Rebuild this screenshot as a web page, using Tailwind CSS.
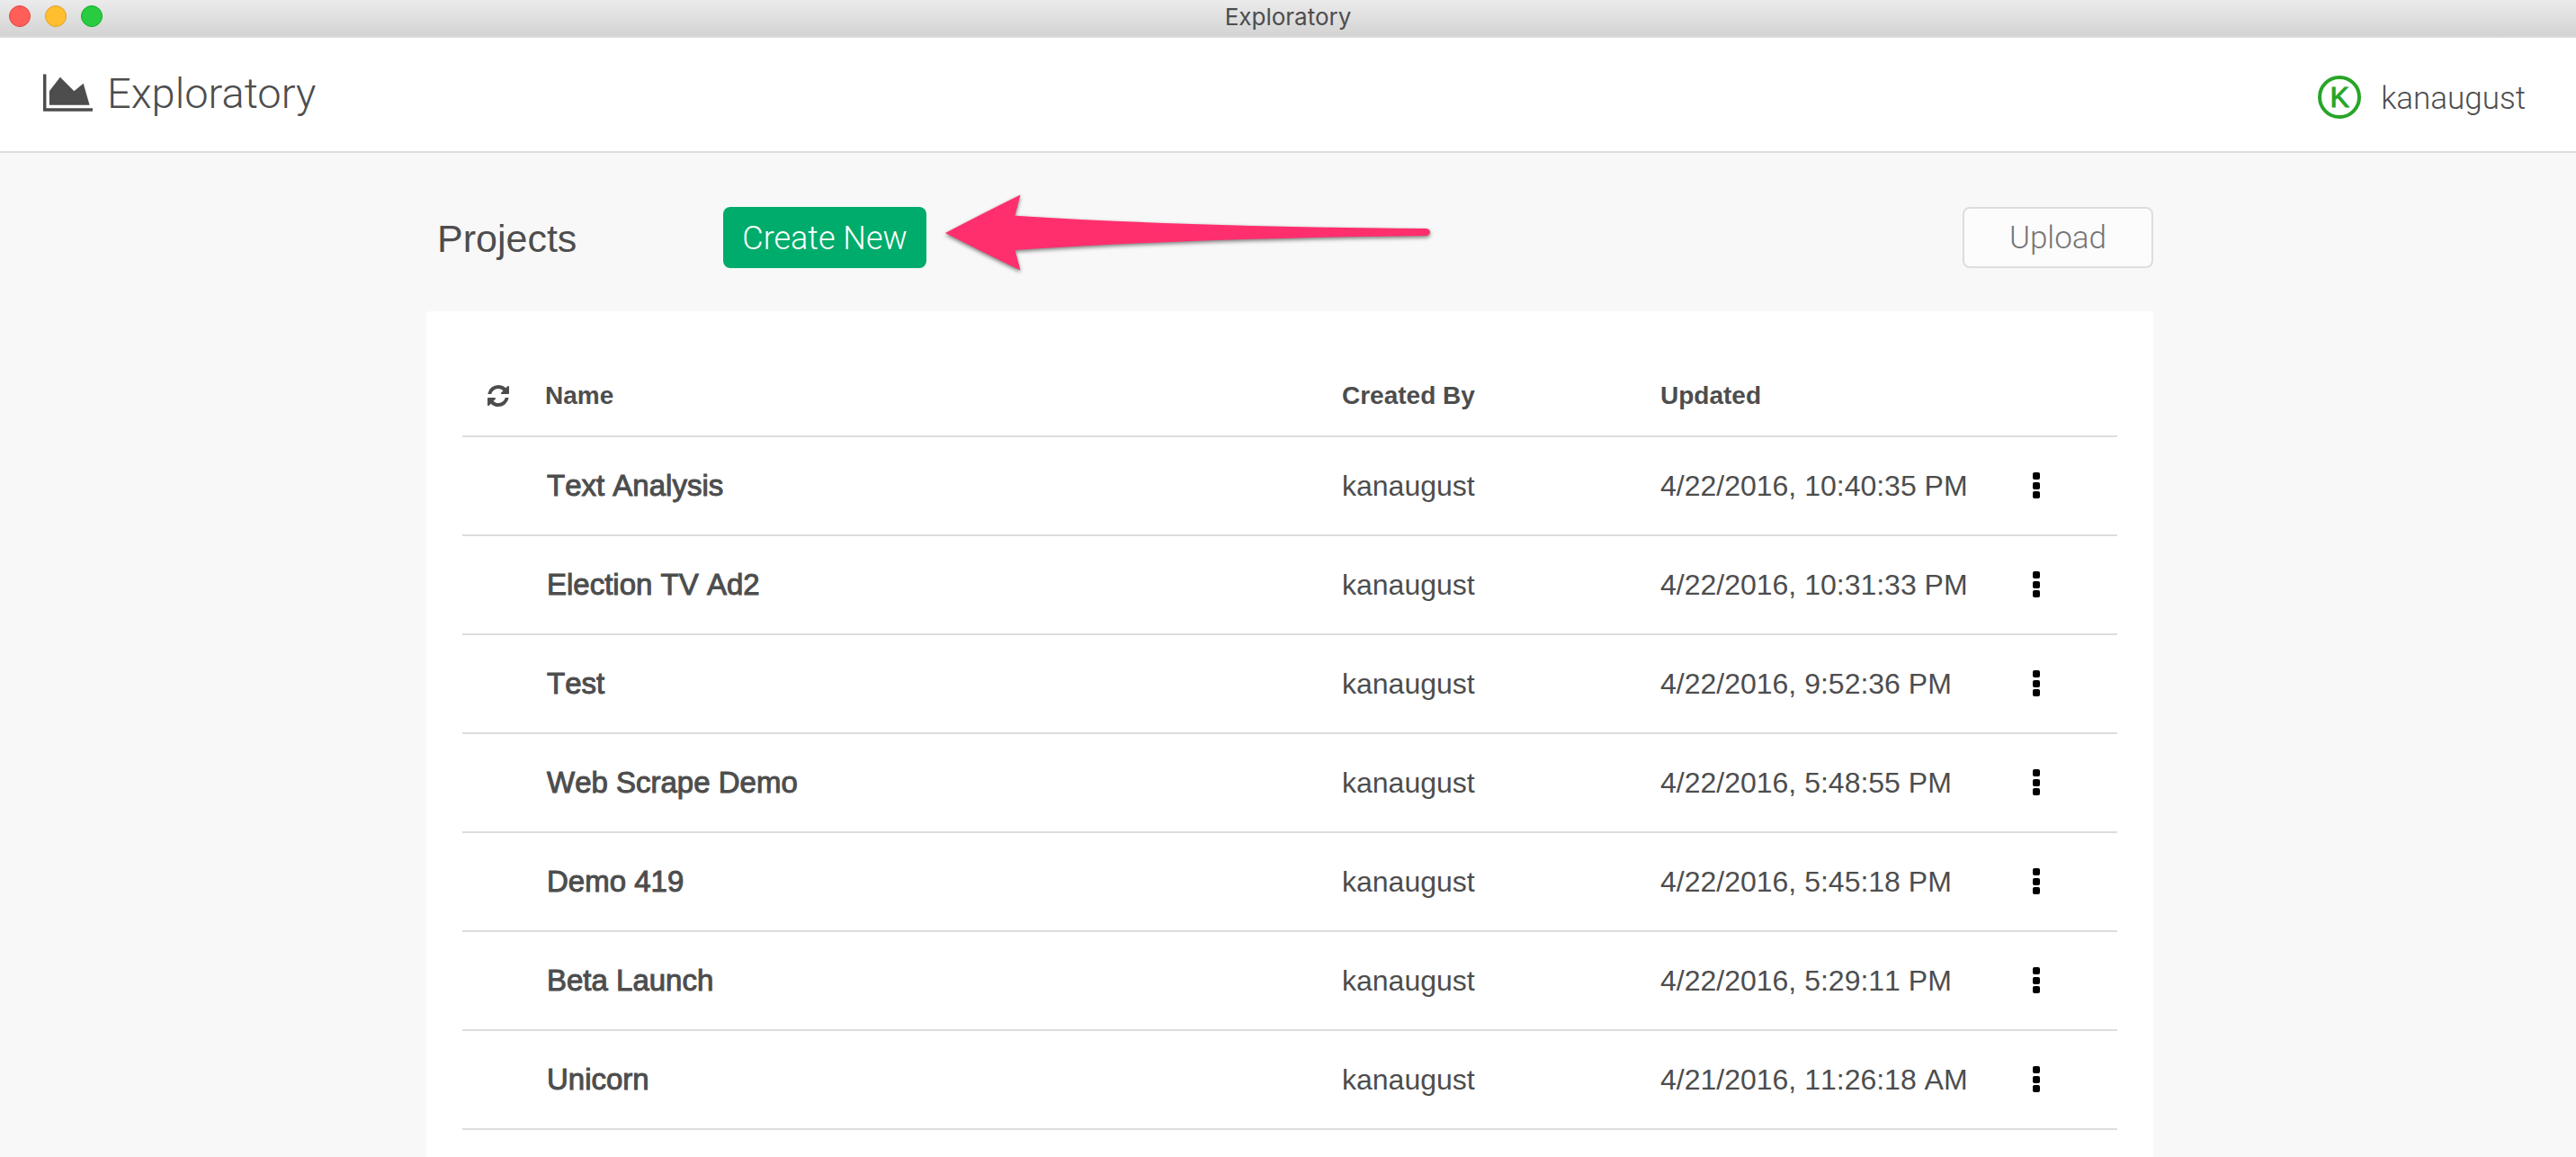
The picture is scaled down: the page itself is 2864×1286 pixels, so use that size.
<!DOCTYPE html>
<html lang="en">
<head>
<meta charset="utf-8">
<title>Exploratory</title>
<script src="https://cdn.jsdelivr.net/npm/@tailwindcss/browser@4"></script>
</head>
<body class="flex min-h-screen flex-col overflow-x-hidden bg-[#f8f8f8] font-['Liberation_Sans',Arial,sans-serif] text-[#4d4d4d]">
  <svg class="hidden" aria-hidden="true">
    <symbol id="more" viewBox="0 0 8 30"><rect y="0" width="8" height="8" rx="2"/><rect y="11" width="8" height="8" rx="2"/><rect y="21" width="8" height="8" rx="2"/></symbol>
  </svg>

  <!-- Window title bar -->
  <div class="grid h-[42px] grid-cols-3 items-center border-b-2 border-[#dcdcdc] bg-linear-to-b from-[#ebebeb] to-[#d3d3d3] px-[10px]">
    <div class="flex gap-4 pb-1">
      <button aria-label="Close" class="size-6 rounded-full border border-[#e2463f] bg-[#ff5f58]"></button>
      <button aria-label="Minimize" class="size-6 rounded-full border border-[#e0a02c] bg-[#ffbf2f]"></button>
      <button aria-label="Zoom" class="size-6 rounded-full border border-[#12ac28] bg-[#29cc41]"></button>
    </div>
    <p class="pb-[2px] text-center font-['Inter',sans-serif] text-[26px] leading-8">Exploratory</p>
  </div>

  <header class="flex h-32 items-center justify-between border-b-2 border-[#dddddd] bg-white pr-14 pl-12">
    <a href="#" class="flex items-center gap-4 pb-1">
      <svg class="h-[42px] w-[55px]" viewBox="0 0 2048 1536" fill="currentColor" aria-hidden="true"><path d="M2048 1408v128h-2048v-1536h128v1408h1920zM1664 384l256 896h-1664v-576l448-576 576 576z"/></svg>
      <span class="pt-[2px] font-['Roboto',sans-serif] text-[47px] leading-[56px] font-light">Exploratory</span>
    </a>
    <a href="#" class="flex items-center gap-[22px] pt-[6px]">
      <span class="flex size-12 items-center justify-center rounded-full border-4 border-[#27a527] text-[32px] leading-8 text-[#27a527] [-webkit-text-stroke:1px]">K</span>
      <span class="pt-1 font-['Roboto',sans-serif] text-[35px] leading-10 font-light">kanaugust</span>
    </a>
  </header>

  <main class="mx-auto flex w-full max-w-[1924px] grow flex-col pl-1">
    <div class="flex items-center pt-[60px] pb-12 pl-3">
      <h1 class="w-[318px] pt-[2px] text-[43px] leading-[48px]">Projects</h1>
      <div class="relative">
        <button class="h-[68px] w-[226px] rounded-lg bg-[#00ac6b] pt-[2px] font-['Roboto',sans-serif] text-[36px] leading-10 font-light whitespace-nowrap text-white">Create New</button>
        <!-- Callout arrow pointing at the button -->
        <svg class="pointer-events-none absolute top-[-24px] left-full h-[104px] w-[570px] drop-shadow-[0_2px_2px_rgba(0,0,0,0.5)]" viewBox="0 0 570 104" aria-hidden="true"><path fill="#ff2f6e" d="M21 53Q59 33 104.500 10.500L98.500 33.700Q290 46 556 48Q560 49 560 52Q560 55 556 56Q290 59 98.500 72L104.500 94.500Q62 74 21 53Z"/></svg>
      </div>
      <button class="ml-auto h-[68px] w-[212px] rounded-lg border-2 border-[#dddddd] bg-[#fcfcfc] pt-[2px] font-['Roboto',sans-serif] text-[35px] leading-10 font-light text-[#757575]">Upload</button>
    </div>

    <section class="grow rounded-t bg-white px-10 pt-[50px]">
      <table class="w-full table-fixed border-collapse text-left text-[32px] leading-10 [font-kerning:none]">
        <colgroup><col class="w-[92px]"><col><col class="w-[354px]"><col class="w-[414px]"><col class="w-[94px]"></colgroup>
        <thead>
          <tr class="h-[89px] border-b-2 border-[#dddddd] text-[28px]">
            <th scope="col" class="pl-7"><button aria-label="Refresh" class="block"><svg class="size-6" viewBox="0 0 1536 1536" fill="currentColor"><path d="M1511 928q0 5-1 7-64 268-268 434.500t-478 166.500q-146 0-282.500-55t-243.500-157l-129 129q-19 19-45 19t-45-19-19-45v-448q0-26 19-45t45-19h448q26 0 45 19t19 45-19 45l-137 137q71 66 161 102t187 36q134 0 250-65t186-179q11-17 53-117 8-23 30-23h192q13 0 22.500 9.500t9.500 22.500zM1536 128v448q0 26-19 45t-45 19h-448q-26 0-45-19t-19-45 19-45l138-138q-148-137-349-137-134 0-250 65t-186 179q-11 17-53 117-8 23-30 23h-199q-13 0-22.500-9.500t-9.500-22.500v-7q65-268 270-434.500t480-166.500q146 0 284 55.500t245 156.500l130-129q19-19 45-19t45 19 19 45z"/></svg></button></th>
            <th scope="col">Name</th><th scope="col">Created By</th><th scope="col">Updated</th><td></td>
          </tr>
        </thead>
        <tbody>
          <tr class="h-[110px] border-b-2 border-[#dddddd]"><td></td><td class="pl-[2px] text-[33px] [-webkit-text-stroke:1px]"><a href="#">Text Analysis</a></td><td>kanaugust</td><td>4/22/2016, 10:40:35 PM</td><td><button aria-label="More actions" class="block text-black"><svg class="h-[30px] w-2" fill="currentColor"><use href="#more"/></svg></button></td></tr>
          <tr class="h-[110px] border-b-2 border-[#dddddd]"><td></td><td class="pl-[2px] text-[33px] [-webkit-text-stroke:1px]"><a href="#">Election TV Ad2</a></td><td>kanaugust</td><td>4/22/2016, 10:31:33 PM</td><td><button aria-label="More actions" class="block text-black"><svg class="h-[30px] w-2" fill="currentColor"><use href="#more"/></svg></button></td></tr>
          <tr class="h-[110px] border-b-2 border-[#dddddd]"><td></td><td class="pl-[2px] text-[33px] [-webkit-text-stroke:1px]"><a href="#">Test</a></td><td>kanaugust</td><td>4/22/2016, 9:52:36 PM</td><td><button aria-label="More actions" class="block text-black"><svg class="h-[30px] w-2" fill="currentColor"><use href="#more"/></svg></button></td></tr>
          <tr class="h-[110px] border-b-2 border-[#dddddd]"><td></td><td class="pl-[2px] text-[33px] [-webkit-text-stroke:1px]"><a href="#">Web Scrape Demo</a></td><td>kanaugust</td><td>4/22/2016, 5:48:55 PM</td><td><button aria-label="More actions" class="block text-black"><svg class="h-[30px] w-2" fill="currentColor"><use href="#more"/></svg></button></td></tr>
          <tr class="h-[110px] border-b-2 border-[#dddddd]"><td></td><td class="pl-[2px] text-[33px] [-webkit-text-stroke:1px]"><a href="#">Demo 419</a></td><td>kanaugust</td><td>4/22/2016, 5:45:18 PM</td><td><button aria-label="More actions" class="block text-black"><svg class="h-[30px] w-2" fill="currentColor"><use href="#more"/></svg></button></td></tr>
          <tr class="h-[110px] border-b-2 border-[#dddddd]"><td></td><td class="pl-[2px] text-[33px] [-webkit-text-stroke:1px]"><a href="#">Beta Launch</a></td><td>kanaugust</td><td>4/22/2016, 5:29:11 PM</td><td><button aria-label="More actions" class="block text-black"><svg class="h-[30px] w-2" fill="currentColor"><use href="#more"/></svg></button></td></tr>
          <tr class="h-[110px] border-b-2 border-[#dddddd]"><td></td><td class="pl-[2px] text-[33px] [-webkit-text-stroke:1px]"><a href="#">Unicorn</a></td><td>kanaugust</td><td>4/21/2016, 11:26:18 AM</td><td><button aria-label="More actions" class="block text-black"><svg class="h-[30px] w-2" fill="currentColor"><use href="#more"/></svg></button></td></tr>
        </tbody>
      </table>
    </section>
  </main>
</body>
</html>
